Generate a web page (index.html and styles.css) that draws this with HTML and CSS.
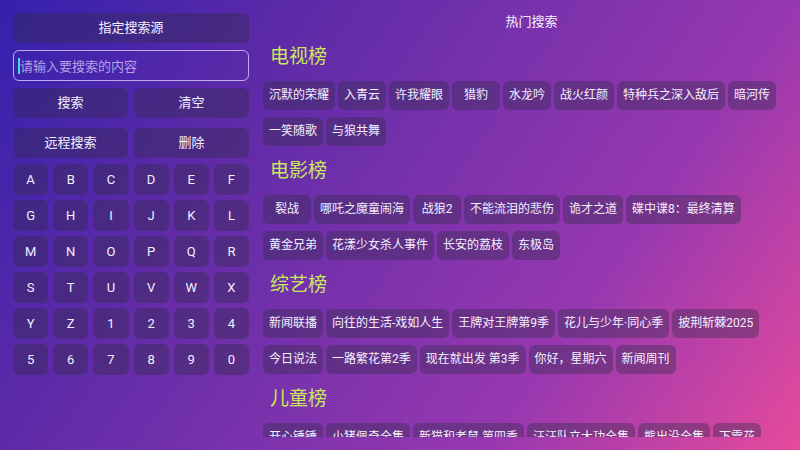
FILE: index.html
```html
<!DOCTYPE html>
<html lang="zh">
<head>
<meta charset="utf-8">
<title>搜索</title>
<link rel="stylesheet" href="styles.css">
</head>
<body>
<div class="page">
  <aside class="left">
    <div class="btn btn-source">指定搜索源</div>
    <div class="input"><span class="caret"></span><span class="placeholder">请输入要搜索的内容</span></div>
    <div class="btn-row">
      <div class="btn">搜索</div>
      <div class="btn">清空</div>
    </div>
    <div class="btn-row row-remote">
      <div class="btn">远程搜索</div>
      <div class="btn">删除</div>
    </div>
    <div class="keys">
      <div class="key">A</div><div class="key">B</div><div class="key">C</div><div class="key">D</div><div class="key">E</div><div class="key">F</div>
      <div class="key">G</div><div class="key">H</div><div class="key">I</div><div class="key">J</div><div class="key">K</div><div class="key">L</div>
      <div class="key">M</div><div class="key">N</div><div class="key">O</div><div class="key">P</div><div class="key">Q</div><div class="key">R</div>
      <div class="key">S</div><div class="key">T</div><div class="key">U</div><div class="key">V</div><div class="key">W</div><div class="key">X</div>
      <div class="key">Y</div><div class="key">Z</div><div class="key">1</div><div class="key">2</div><div class="key">3</div><div class="key">4</div>
      <div class="key">5</div><div class="key">6</div><div class="key">7</div><div class="key">8</div><div class="key">9</div><div class="key">0</div>
    </div>
  </aside>
  <main class="right">
    <div class="hot-title">热门搜索</div>
    <div class="scroll">
      <section class="sec">
        <h2 class="sec-title">电视榜</h2>
        <div class="tags">
          <span class="tag">沉默的荣耀</span><span class="tag">入青云</span><span class="tag">许我耀眼</span><span class="tag">猎豹</span><span class="tag">水龙吟</span><span class="tag">战火红颜</span><span class="tag">特种兵之深入敌后</span><span class="tag">暗河传</span><span class="tag">一笑随歌</span><span class="tag">与狼共舞</span>
        </div>
      </section>
      <section class="sec">
        <h2 class="sec-title">电影榜</h2>
        <div class="tags">
          <span class="tag">裂战</span><span class="tag">哪吒之魔童闹海</span><span class="tag">战狼2</span><span class="tag">不能流泪的悲伤</span><span class="tag">诡才之道</span><span class="tag">碟中谍8：最终清算</span><span class="tag">黄金兄弟</span><span class="tag">花漾少女杀人事件</span><span class="tag">长安的荔枝</span><span class="tag">东极岛</span>
        </div>
      </section>
      <section class="sec">
        <h2 class="sec-title">综艺榜</h2>
        <div class="tags">
          <span class="tag">新闻联播</span><span class="tag">向往的生活-戏如人生</span><span class="tag">王牌对王牌第9季</span><span class="tag">花儿与少年·同心季</span><span class="tag">披荆斩棘2025</span><span class="tag">今日说法</span><span class="tag">一路繁花第2季</span><span class="tag">现在就出发 第3季</span><span class="tag">你好，星期六</span><span class="tag">新闻周刊</span>
        </div>
      </section>
      <section class="sec">
        <h2 class="sec-title">儿童榜</h2>
        <div class="tags">
          <span class="tag">开心锤锤</span><span class="tag">小猪佩奇全集</span><span class="tag">新猫和老鼠 第四季</span><span class="tag">汪汪队立大功全集</span><span class="tag">熊出没全集</span><span class="tag">下雪花</span><span class="tag">超级飞侠</span><span class="tag">宝宝巴士</span>
        </div>
      </section>
    </div>
  </main>
</div>
</body>
</html>
```

FILE: styles.css
```css
* { box-sizing: border-box; }
html, body {
  margin: 0;
  padding: 0;
  width: 800px;
  height: 450px;
  overflow: hidden;
}
body {
  font-family: Roboto, "Noto Sans CJK SC", sans-serif;
  color: #fff;
  background: linear-gradient(125deg, #3421ae 0%, #5e2aa8 28%, #7a32ac 50%, #9838b0 72%, #e64a9c 100%);
}
.page {
  display: flex;
  height: 450px;
}
.left {
  width: 236px;
  margin: 13px 0 0 13px;
  display: flex;
  flex-direction: column;
}
.btn {
  height: 30px;
  border-radius: 6px;
  background: rgba(52, 44, 78, 0.42);
  font-size: 13px;
  line-height: 30px;
  text-align: center;
  color: #f4f0ff;
}
.input {
  margin-top: 7px;
  height: 31px;
  border: 1.5px solid rgba(210, 196, 250, 0.85);
  border-radius: 6px;
  display: flex;
  align-items: center;
  padding-left: 4px;
  font-size: 13px;
}
.caret {
  width: 2px;
  height: 16px;
  background: #3fe0d2;
}
.placeholder {
  color: rgba(220, 205, 255, 0.75);
}
.btn-row {
  margin-top: 7px;
  display: grid;
  grid-template-columns: 1fr 1fr;
  gap: 6px;
}
.row-remote { margin-top: 10px; }
.keys {
  margin-top: 6px;
  display: grid;
  grid-template-columns: repeat(6, 1fr);
  grid-auto-rows: 31px;
  gap: 5px;
}
.key {
  border-radius: 6px;
  background: rgba(52, 44, 78, 0.42);
  font-size: 13px;
  line-height: 31px;
  text-align: center;
  color: #f4f0ff;
}
.right {
  flex: 1;
  margin-left: 14px;
  padding: 12px 0 13px 0;
  display: flex;
  flex-direction: column;
  min-width: 0;
}
.hot-title {
  height: 20px;
  line-height: 20px;
  font-size: 13px;
  text-align: center;
  color: #f4f0ff;
}
.scroll {
  flex: 1;
  overflow: hidden;
  padding-right: 12px;
}
.sec { margin-top: 10px; }
.sec-title {
  margin: 0 0 9px 7px;
  height: 30px;
  line-height: 30px;
  font-size: 19px;
  font-weight: normal;
  color: #c9e85c;
}
.tags {
  display: flex;
  flex-wrap: wrap;
  gap: 7px 3px;
}
.tag {
  height: 29px;
  line-height: 29px;
  min-width: 48px;
  padding: 0 6px;
  border-radius: 6px;
  background: rgba(52, 44, 78, 0.4);
  font-size: 12px;
  text-align: center;
  color: #f4f0ff;
  white-space: nowrap;
}
```
